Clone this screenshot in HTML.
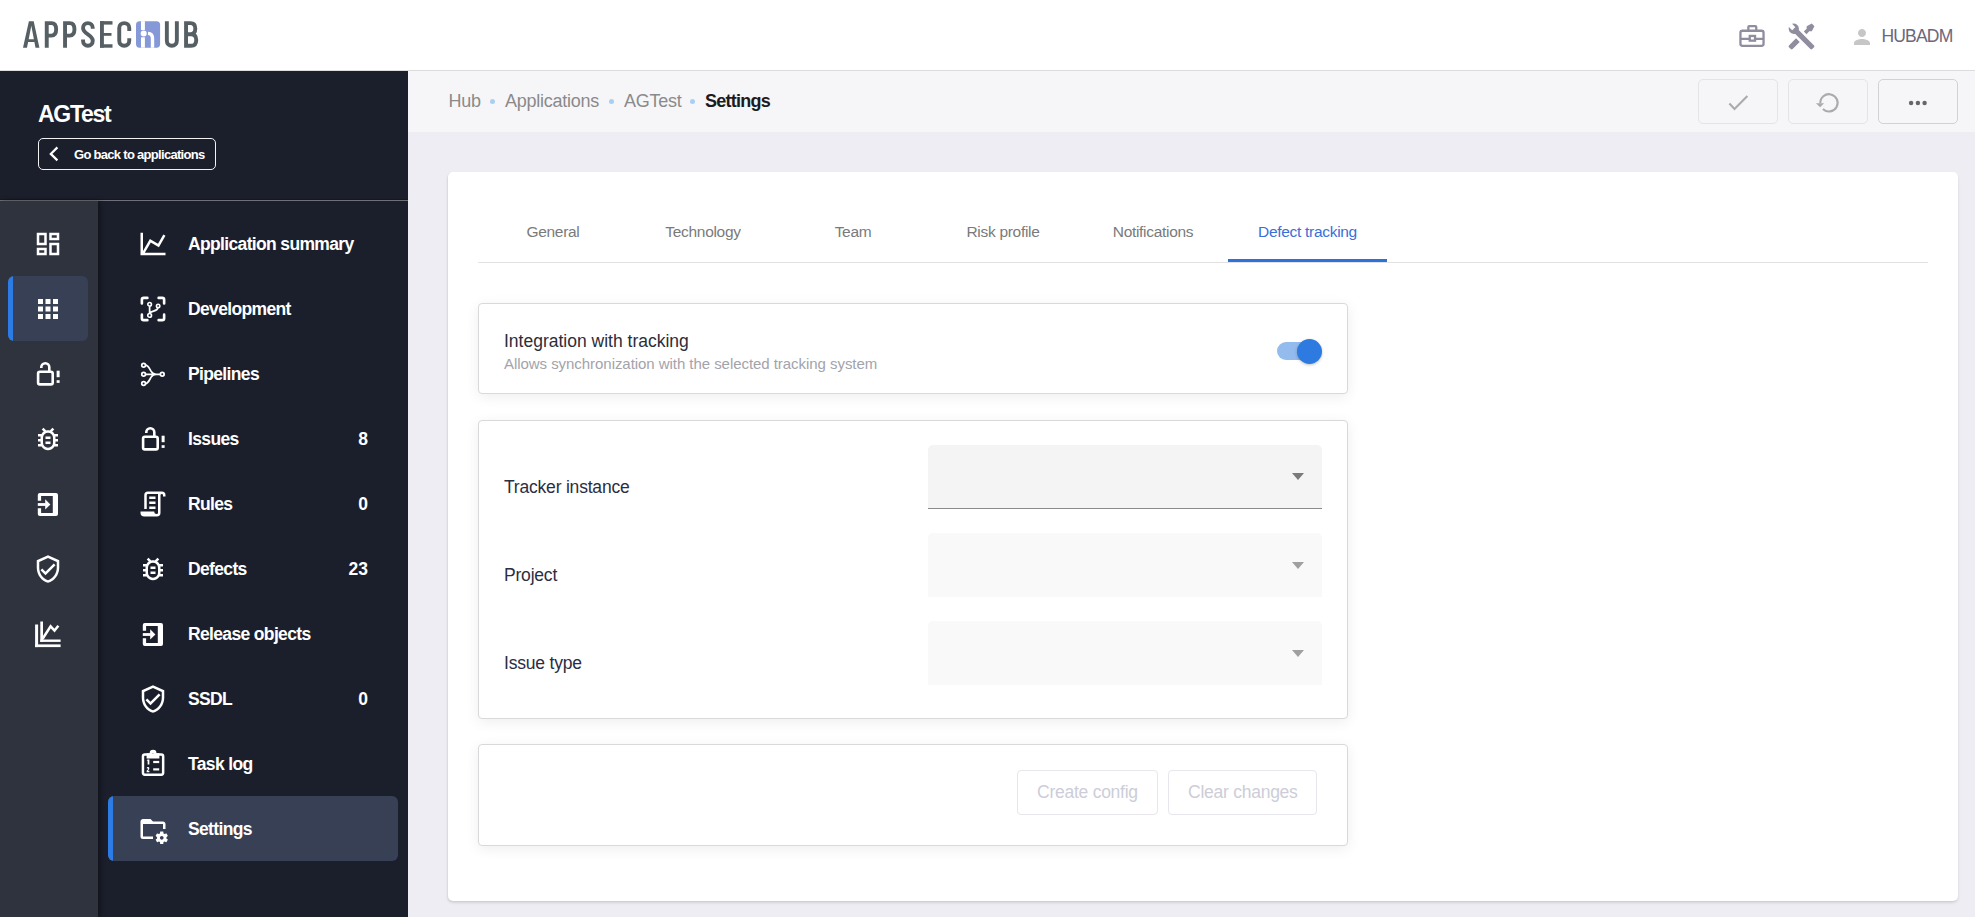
<!DOCTYPE html>
<html><head><meta charset="utf-8">
<style>
*{margin:0;padding:0;box-sizing:border-box}
html,body{width:1975px;height:917px;overflow:hidden;background:#eeedf3;font-family:"Liberation Sans",sans-serif}
.a{position:absolute}
.t{position:absolute;white-space:nowrap;line-height:1}
svg{position:absolute;overflow:visible}
#hdr{left:0;top:0;width:1975px;height:71px;background:#fff;border-bottom:1px solid #dcdcde}
#side{left:0;top:71px;width:408px;height:846px;background:#1b1f2b}
#rail{left:0;top:201px;width:98px;height:716px;background:#2f333e;box-shadow:2px 0 5px rgba(0,0,0,0.4)}
#bc{left:408px;top:71px;width:1567px;height:61px;background:#f6f6f8}
.menu{color:#fff;font-weight:bold;font-size:17.5px;letter-spacing:-0.65px;margin-top:1px}
.cnt{color:#fff;font-weight:bold;font-size:17.5px;text-align:right;width:60px;left:308px;margin-top:1px}
.bct{font-size:18px;color:#8a8a8a;letter-spacing:-0.25px;top:92px}
.dot{width:5px;height:5px;border-radius:50%;background:#a9cff3;top:99px}
.abtn{top:79px;width:80px;height:45px;border:1px solid #e4e4e8;border-radius:5px;background:#f6f6f8}
#card{left:448px;top:172px;width:1510px;height:729px;background:#fff;border-radius:5px;box-shadow:0 2px 3px rgba(0,0,0,0.10),-1px 1px 2px rgba(0,0,0,0.05)}
.tab{font-size:15.5px;color:#7a7a7a;letter-spacing:-0.3px;top:224px;text-align:center;width:160px}
.box{border:1px solid #d9d9db;border-radius:4px;background:#fff;box-shadow:0 3px 14px rgba(0,0,0,0.07)}
.lbl{font-size:17.5px;color:#2b2d42;letter-spacing:-0.2px;left:504px;margin-top:1px}
.dd{left:928px;width:394px;height:64px;border-radius:5px 5px 0 0}
.arr{width:0;height:0;border-left:6px solid transparent;border-right:6px solid transparent;border-top:7px solid #7a7a7a;left:1292px}
.btn{top:770px;height:45px;border:1px solid #e6e6ec;border-radius:4px;background:#fff}
.btnt{font-size:17.5px;color:#cdcdd8;letter-spacing:-0.25px;top:784px}
</style></head><body>
<!-- header -->
<div id="hdr" class="a"></div>
<!-- logo -->
<svg style="left:0;top:0" width="220" height="70" viewBox="0 0 220 70">
<g fill="#566064">
<path fill-rule="evenodd" d="M23,47.7 L28.9,21.15 L33.7,21.15 L39.4,47.7 L35.5,47.7 L34.4,42.1 L28.1,42.1 L27,47.7 Z M28.7,39.3 L31.3,25.8 L33.9,39.3 Z"/>
<rect x="100" y="21.15" width="3.9" height="26.55"/><rect x="100" y="21.15" width="12.5" height="3.45"/><rect x="100" y="33" width="11.5" height="2.8"/><rect x="100" y="44.25" width="12.5" height="3.45"/>
</g>
<g fill="none" stroke="#566064" stroke-width="3.9">
<path d="M46.75,21.15 V47.7 M46.75,23.1 H51.5 Q56.15,23.1 56.15,29.35 Q56.15,35.6 51.5,35.6 H46.75"/>
<path d="M65.05,21.15 V47.7 M65.05,23.1 H69.8 Q74.45,23.1 74.45,29.35 Q74.45,35.6 69.8,35.6 H65.05"/>
<path d="M92.75,28.7 V28 C92.75,25 90.5,23.1 87.9,23.1 C85.2,23.1 83.05,25 83.05,28 C83.05,31 85,32.5 87.9,34.4 C90.8,36.3 92.75,37.8 92.75,40.8 C92.75,43.8 90.6,45.75 87.9,45.75 C85.2,45.75 83.05,43.8 83.05,40.8 V39.6"/>
<path d="M129.25,31 V28 C129.25,25 127.2,23.1 124.25,23.1 C121.3,23.1 119.25,25 119.25,28 V40.8 C119.25,43.8 121.3,45.75 124.25,45.75 C127.2,45.75 129.25,43.8 129.25,40.8 V38.2"/>
<path d="M166.85,21.15 V40.8 C166.85,43.8 168.9,45.75 171.85,45.75 C174.8,45.75 176.85,43.8 176.85,40.8 V21.15"/>
<path d="M186.05,21.15 V47.7 M186.05,23.1 H190.5 Q195.3,23.1 195.3,28.6 Q195.3,34.3 190.5,34.3 H186.05 M186.05,34.3 H191 Q196.25,34.3 196.25,39.9 Q196.25,45.75 191,45.75 H186.05"/>
</g>
<rect x="136" y="21.15" width="24.1" height="26.55" rx="3.6" fill="#8599d8"/>
<g fill="#fff">
<rect x="141" y="21.15" width="3.9" height="8.9"/><rect x="141" y="37.3" width="3.9" height="10.4"/>
<circle cx="143.7" cy="33.5" r="3"/>
</g>
<path d="M148,33.4 Q152.5,33.6 152.5,38.6 V47.7" fill="none" stroke="#fff" stroke-width="3.4"/>
</svg>

<!-- sidebar -->
<div id="side" class="a"></div>
<div class="a" style="left:0;top:199px;width:408px;height:1px;background:#151821"></div><div class="a" style="left:0;top:200px;width:408px;height:1px;background:#6f7177"></div>
<div id="rail" class="a"></div>
<div class="t" style="left:38px;top:102.7px;font-size:23px;font-weight:bold;color:#fff;letter-spacing:-1.3px">AGTest</div>
<div class="a" style="left:38px;top:138px;width:178px;height:32px;border:1.5px solid #f2f2f2;border-radius:5px"></div>
<svg style="left:40px;top:140px" width="30" height="28" viewBox="40 140 30 28"><path d="M57.4,147.4 L50.8,153.9 L57.4,160.4" fill="none" stroke="#fff" stroke-width="2.2"/></svg>
<div class="t" style="left:74px;top:148.1px;font-size:13px;font-weight:bold;color:#fff;letter-spacing:-0.7px">Go back to applications</div>

<!-- rail active -->
<div class="a" style="left:8px;top:276px;width:80px;height:65px;background:#384056;border-radius:6px;overflow:hidden"><div class="a" style="left:0;top:0;width:5px;height:65px;background:#2d7be5"></div></div>
<!-- settings active -->
<div class="a" style="left:108px;top:796px;width:290px;height:65px;background:#384056;border-radius:6px;overflow:hidden"><div class="a" style="left:0;top:0;width:5px;height:65px;background:#2d7be5"></div></div>

<div class="t menu" style="left:188px;top:235px">Application summary</div>
<div class="t menu" style="left:188px;top:300px">Development</div>
<div class="t menu" style="left:188px;top:365px">Pipelines</div>
<div class="t menu" style="left:188px;top:430px">Issues</div>
<div class="t menu" style="left:188px;top:495px">Rules</div>
<div class="t menu" style="left:188px;top:560px">Defects</div>
<div class="t menu" style="left:188px;top:625px">Release objects</div>
<div class="t menu" style="left:188px;top:690px">SSDL</div>
<div class="t menu" style="left:188px;top:755px">Task log</div>
<div class="t menu" style="left:188px;top:820px">Settings</div>
<div class="t cnt" style="top:430px">8</div>
<div class="t cnt" style="top:495px">0</div>
<div class="t cnt" style="top:560px">23</div>
<div class="t cnt" style="top:690px">0</div>

<!-- breadcrumb bar -->
<div id="bc" class="a"></div>
<div class="t bct" style="left:448.5px">Hub</div>
<div class="a dot" style="left:490px"></div>
<div class="t bct" style="left:505px">Applications</div>
<div class="a dot" style="left:609px"></div>
<div class="t bct" style="left:624px">AGTest</div>
<div class="a dot" style="left:690px"></div>
<div class="t bct" style="left:705px;color:#1c1c20;font-weight:bold;letter-spacing:-0.75px">Settings</div>
<div class="a abtn" style="left:1698px"></div>
<div class="a abtn" style="left:1788px"></div>
<div class="a abtn" style="left:1878px;border-color:#d2d2d6"></div>

<!-- main card -->
<div id="card" class="a"></div>
<div class="a" style="left:478px;top:262px;width:1450px;height:1px;background:#e2e2e4"></div>
<div class="t tab" style="left:473px">General</div>
<div class="t tab" style="left:623px">Technology</div>
<div class="t tab" style="left:773px">Team</div>
<div class="t tab" style="left:923px">Risk profile</div>
<div class="t tab" style="left:1073px">Notifications</div>
<div class="t tab" style="left:1227.5px;color:#3a6fd8">Defect tracking</div>
<div class="a" style="left:1228px;top:259px;width:159px;height:3px;background:#2d72d9"></div>

<!-- card 1 -->
<div class="a box" style="left:478px;top:303px;width:870px;height:91px"></div>
<div class="t" style="left:504px;top:332.6px;font-size:17.5px;color:#2b2d3a">Integration with tracking</div>
<div class="t" style="left:504px;top:356.3px;font-size:15px;color:#a3a3ab;letter-spacing:-0.05px">Allows synchronization with the selected tracking system</div>
<div class="a" style="left:1277px;top:342px;width:42px;height:18px;border-radius:9px;background:#94bbee"></div>
<div class="a" style="left:1297px;top:339px;width:25px;height:25px;border-radius:50%;background:#2d7be0;box-shadow:0 1px 3px rgba(0,0,0,0.25)"></div>

<!-- card 2 -->
<div class="a box" style="left:478px;top:419.5px;width:870px;height:299.5px"></div>
<div class="t lbl" style="top:478px">Tracker instance</div>
<div class="t lbl" style="top:566px">Project</div>
<div class="t lbl" style="top:654px">Issue type</div>
<div class="a dd" style="top:445px;background:#f4f4f4;border-bottom:1px solid #8a8a8a"></div>
<div class="a arr" style="top:473px"></div>
<div class="a dd" style="top:533px;background:#f9f9f9"></div>
<div class="a arr" style="top:561.5px;border-top-color:#a0a0a0"></div>
<div class="a dd" style="top:621px;background:#f9f9f9"></div>
<div class="a arr" style="top:649.5px;border-top-color:#a0a0a0"></div>

<!-- card 3 -->
<div class="a box" style="left:478px;top:744px;width:870px;height:102px"></div>
<div class="a btn" style="left:1017px;width:141px"></div>
<div class="a btn" style="left:1168px;width:149px"></div>
<div class="t btnt" style="left:1037px">Create config</div>
<div class="t btnt" style="left:1188px">Clear changes</div>

<!-- icons -->
<svg style="left:138px;top:228.5px" width="30" height="30" viewBox="0 0 24 24"><path fill="#fff" d="M16,11.78L20.24,4.45L21.97,5.45L16.74,14.5L10.23,10.75L5.46,19H22V21H2V3H4V17.54L9.5,8L16,11.78Z"/></svg>
<svg style="left:138px;top:293.5px" width="30" height="30" viewBox="0 0 24 24"><g fill="none" stroke="#fff" stroke-width="2.1" stroke-linecap="round" stroke-linejoin="round">
<path d="M3.1,7.5 V4.6 Q3.1,3.1 4.6,3.1 H7.5"/><path d="M16.5,3.1 H19.4 Q20.9,3.1 20.9,4.6 V7.5"/>
<path d="M3.1,16.5 V19.4 Q3.1,20.9 4.6,20.9 H7.5"/><path d="M16.5,20.9 H19.4 Q20.9,20.9 20.9,19.4 V16.5"/></g>
<g fill="none" stroke="#fff" stroke-width="1.3">
<circle cx="9.3" cy="8.2" r="1.45"/><circle cx="16.1" cy="9.5" r="1.35"/><circle cx="9.3" cy="17.1" r="1.5"/>
<path d="M9.3,9.7 V15.6 M9.6,15.2 C10.5,13.2 15.8,14 15.9,10.9" stroke-width="1.4"/></g></svg>
<svg style="left:138px;top:358.5px" width="30" height="30" viewBox="0 0 24 24"><g fill="none" stroke="#fff" stroke-width="1.4">
<circle cx="4.5" cy="5" r="1.5"/><circle cx="4.5" cy="12.2" r="1.5"/><circle cx="4.5" cy="19.6" r="1.5"/><circle cx="19.4" cy="12.2" r="1.5"/>
<path d="M5.9,4.9 C8.4,4.9 9.4,8.3 10.5,9.9 C11.6,11.5 12.6,12.2 14.5,12.2 M5.9,19.7 C8.4,19.7 9.4,16.1 10.5,14.5 C11.6,12.9 12.6,12.2 14.5,12.2 M6,12.2 H17.9"/></g></svg>
<svg style="left:138px;top:423.5px" width="30" height="30" viewBox="0 0 24 24"><g fill="none" stroke="#fff" stroke-width="2.08">
<rect x="4.08" y="10.16" width="11.68" height="10.16" rx="1.4"/>
<path d="M6.64,7.2 V6.64 A3.2,3.2 0 0 1 13.04,6.64 V10.16"/></g>
<rect x="18.9" y="9.36" width="2.4" height="5.2" fill="#fff"/><rect x="18.9" y="16.96" width="2.4" height="2.16" fill="#fff"/></svg>
<svg style="left:138px;top:488.5px" width="30" height="30" viewBox="0 0 24 24"><path fill="#fff" d="M15,20A1,1 0 0,0 16,19V4H8A1,1 0 0,0 7,5V16H5V5A3,3 0 0,1 8,2H19A3,3 0 0,1 22,5V6H20V5A1,1 0 0,0 19,4A1,1 0 0,0 18,5V9L18,19A3,3 0 0,1 15,22H5A3,3 0 0,1 2,19V18H13A2,2 0 0,0 15,20M9,6H14V8H9V6M9,10H14V12H9V10M9,14H14V16H9V14Z"/></svg>
<svg style="left:138px;top:553.5px" width="30" height="30" viewBox="0 0 24 24"><path fill="#fff" d="M20,8H17.19C16.74,7.2 16.12,6.5 15.37,6L17,4.41L15.59,3L13.42,5.17C12.96,5.06 12.5,5 12,5C11.5,5 11.05,5.06 10.59,5.17L8.41,3L7,4.41L8.62,6C7.87,6.5 7.26,7.21 6.81,8H4V10H6.09C6.03,10.33 6,10.66 6,11V12H4V14H6V15C6,15.34 6.03,15.67 6.09,16H4V18H6.81C8.47,20.87 12.14,21.84 15,20.18C15.91,19.66 16.67,18.9 17.19,18H20V16H17.91C17.97,15.67 18,15.34 18,15V14H20V12H18V11C18,10.66 17.97,10.33 17.91,10H20V8M16,15A4,4 0 0,1 12,19A4,4 0 0,1 8,15V11A4,4 0 0,1 12,7A4,4 0 0,1 16,11V15M14,10V12H10V10H14M10,14H14V16H10V14Z"/></svg>
<svg style="left:138px;top:618.5px" width="30" height="30" viewBox="0 0 24 24"><g fill="#fff">
<path d="M3.84,9.36 V4.8 Q3.84,3.2 5.44,3.2 H18.4 Q20,3.2 20,4.8 V19.92 Q20,21.52 18.4,21.52 H5.44 Q3.84,21.52 3.84,19.92 V15.44 H6.48 V19.12 H15.84 V5.6 H6.48 V9.36 Z"/>
<rect x="3.84" y="11.28" width="6.4" height="2.24"/><path d="M9.76,8.24 L13.92,12.4 L9.76,16.32 Z"/></g></svg>
<svg style="left:138px;top:683.5px" width="30" height="30" viewBox="0 0 24 24"><path fill="#fff" d="M21,11C21,16.55 17.16,21.74 12,23C6.84,21.74 3,16.55 3,11V5L12,1L21,5V11M12,21C15.75,20 19,15.54 19,11.22V6.3L12,3.18L5,6.3V11.22C5,15.54 8.25,20 12,21M10,17L6,13L7.41,11.59L10,14.17L16.59,7.58L18,9"/></svg>
<svg style="left:138px;top:748.5px" width="30" height="30" viewBox="0 0 24 24"><rect x="3.96" y="4.44" width="16.16" height="16.08" rx="1.5" fill="none" stroke="#fff" stroke-width="2"/>
<path fill="#fff" fill-rule="evenodd" d="M6.88,3.44 H9.3 A2.7,2.7 0 0 1 14.8,3.44 H17.12 V7.6 H6.88 Z M11.92,4.0 m-0.9,0 a0.9,0.9 0 1 0 1.8,0 a0.9,0.9 0 1 0 -1.8,0 Z"/>
<g fill="#fff"><rect x="7.7" y="8.4" width="1.4" height="4"/><path d="M6.9,8.9 L7.9,8.4 V9.6 Z"/>
<path d="M6.9,15.4 Q7,14.3 8,14.3 Q9.1,14.3 9.1,15.3 Q9.1,16.1 8.2,16.9 L7.9,17.3 H9.1 V18.5 H6.9 V17.4 L8,16.2 Q8,15.5 7.9,15.5 Q7.9,15.6 7.9,15.6 Z"/>
<rect x="12.16" y="9.52" width="4.8" height="1.76"/><rect x="12.16" y="15.44" width="4.8" height="1.76"/></g></svg>
<svg style="left:138px;top:813.5px" width="30" height="30" viewBox="0 0 24 24"><path fill="#fff" d="M4 4C2.89 4 2 4.89 2 6V18A2 2 0 0 0 4 20H12V18H4V8H20V12H22V8C22 6.89 21.1 6 20 6H12L10 4M18 14C17.87 14 17.76 14.09 17.74 14.21L17.55 15.53C17.25 15.66 16.96 15.82 16.7 16L15.46 15.5C15.35 15.5 15.22 15.5 15.15 15.63L14.15 17.36C14.09 17.47 14.11 17.6 14.21 17.68L15.27 18.5C15.25 18.67 15.24 18.83 15.24 19C15.24 19.17 15.25 19.33 15.27 19.5L14.21 20.32C14.12 20.4 14.09 20.53 14.15 20.64L15.15 22.37C15.21 22.5 15.34 22.5 15.46 22.5L16.7 22C16.96 22.18 17.24 22.35 17.55 22.47L17.74 23.79C17.76 23.91 17.86 24 18 24H20C20.11 24 20.22 23.91 20.24 23.79L20.43 22.47C20.73 22.34 21 22.18 21.27 22L22.5 22.5C22.63 22.5 22.76 22.5 22.83 22.37L23.83 20.64C23.89 20.53 23.86 20.4 23.77 20.32L22.7 19.5C22.72 19.33 22.74 19.17 22.74 19C22.74 18.83 22.73 18.67 22.7 18.5L23.76 17.68C23.85 17.6 23.88 17.47 23.82 17.36L22.82 15.63C22.76 15.5 22.63 15.5 22.5 15.5L21.27 16C21 15.82 20.73 15.65 20.42 15.53L20.23 14.21C20.22 14.09 20.11 14 20 14M19 17.5C19.83 17.5 20.5 18.17 20.5 19C20.5 19.83 19.83 20.5 19 20.5C18.16 20.5 17.5 19.83 17.5 19C17.5 18.17 18.17 17.5 19 17.5Z"/></svg>
<svg style="left:33px;top:228.5px" width="30" height="30" viewBox="0 0 24 24"><path fill="#fff" d="M19 5v2h-4V5h4M9 5v6H5V5h4m10 8v6h-4v-6h4M9 17v2H5v-2h4M21 3h-8v6h8V3zM11 3H3v10h8V3zm10 8h-8v10h8V11zm-10 4H3v6h8v-6z"/></svg>
<svg style="left:33px;top:293.5px" width="30" height="30" viewBox="0 0 24 24"><path fill="#fff" d="M4 8h4V4H4v4zm6 12h4v-4h-4v4zm-6 0h4v-4H4v4zm0-6h4v-4H4v4zm6 0h4v-4h-4v4zm6-10v4h4V4h-4zm-6 4h4V4h-4v4zm6 6h4v-4h-4v4zm0 6h4v-4h-4v4z"/></svg>
<svg style="left:33px;top:358.5px" width="30" height="30" viewBox="0 0 24 24"><g fill="none" stroke="#fff" stroke-width="2.08">
<rect x="4.08" y="10.16" width="11.68" height="10.16" rx="1.4"/>
<path d="M6.64,7.2 V6.64 A3.2,3.2 0 0 1 13.04,6.64 V10.16"/></g>
<rect x="18.9" y="9.36" width="2.4" height="5.2" fill="#fff"/><rect x="18.9" y="16.96" width="2.4" height="2.16" fill="#fff"/></svg>
<svg style="left:33px;top:423.5px" width="30" height="30" viewBox="0 0 24 24"><path fill="#fff" d="M20,8H17.19C16.74,7.2 16.12,6.5 15.37,6L17,4.41L15.59,3L13.42,5.17C12.96,5.06 12.5,5 12,5C11.5,5 11.05,5.06 10.59,5.17L8.41,3L7,4.41L8.62,6C7.87,6.5 7.26,7.21 6.81,8H4V10H6.09C6.03,10.33 6,10.66 6,11V12H4V14H6V15C6,15.34 6.03,15.67 6.09,16H4V18H6.81C8.47,20.87 12.14,21.84 15,20.18C15.91,19.66 16.67,18.9 17.19,18H20V16H17.91C17.97,15.67 18,15.34 18,15V14H20V12H18V11C18,10.66 17.97,10.33 17.91,10H20V8M16,15A4,4 0 0,1 12,19A4,4 0 0,1 8,15V11A4,4 0 0,1 12,7A4,4 0 0,1 16,11V15M14,10V12H10V10H14M10,14H14V16H10V14Z"/></svg>
<svg style="left:33px;top:488.5px" width="30" height="30" viewBox="0 0 24 24"><g fill="#fff">
<path d="M3.84,9.36 V4.8 Q3.84,3.2 5.44,3.2 H18.4 Q20,3.2 20,4.8 V19.92 Q20,21.52 18.4,21.52 H5.44 Q3.84,21.52 3.84,19.92 V15.44 H6.48 V19.12 H15.84 V5.6 H6.48 V9.36 Z"/>
<rect x="3.84" y="11.28" width="6.4" height="2.24"/><path d="M9.76,8.24 L13.92,12.4 L9.76,16.32 Z"/></g></svg>
<svg style="left:33px;top:553.5px" width="30" height="30" viewBox="0 0 24 24"><path fill="#fff" d="M21,11C21,16.55 17.16,21.74 12,23C6.84,21.74 3,16.55 3,11V5L12,1L21,5V11M12,21C15.75,20 19,15.54 19,11.22V6.3L12,3.18L5,6.3V11.22C5,15.54 8.25,20 12,21M10,17L6,13L7.41,11.59L10,14.17L16.59,7.58L18,9"/></svg>
<svg style="left:33px;top:618.5px" width="30" height="30" viewBox="0 0 24 24"><g fill="#fff"><rect x="1.68" y="4.4" width="2.4" height="18.08"/><rect x="1.68" y="20.32" width="20.4" height="2.16"/>
<rect x="5.84" y="2" width="2.16" height="16.32"/><rect x="5.84" y="16.4" width="16.24" height="1.92"/></g>
<path d="M7.6,16 L14.1,5.9 L17.2,9.2 L20.3,5.4" fill="none" stroke="#fff" stroke-width="2"/></svg>
<svg style="left:1730px;top:15px" width="40" height="40" viewBox="1730 15 40 40">
<g fill="none" stroke="#8f8d9e" stroke-width="2.3">
<path d="M1748.35,30 V27 Q1748.35,26.05 1749.3,26.05 H1755.3 Q1756.25,26.05 1756.25,27 V30"/>
<rect x="1740.45" y="30.75" width="23.1" height="15.1" rx="2"/>
<path d="M1740.45,38.85 H1749.75 M1755.05,38.85 H1763.55"/>
<rect x="1749.75" y="35.95" width="5.3" height="4.7"/></g></svg>
<svg style="left:1786.3px;top:20.6px" width="31" height="31" viewBox="0 0 24 24"><path fill="#8f8d9e" d="M21.71 20.29L20.29 21.71A1 1 0 0 1 18.88 21.71L7 9.85A3.81 3.81 0 0 1 6 10A4 4 0 0 1 2.22 4.7L4.76 7.24L5.29 6.71L6.71 5.29L7.24 4.76L4.7 2.22A4 4 0 0 1 10 6A3.81 3.81 0 0 1 9.85 7L21.71 18.88A1 1 0 0 1 21.71 20.29M2.29 18.88A1 1 0 0 0 2.29 20.29L3.71 21.71A1 1 0 0 0 5.12 21.71L10.59 16.25L7.76 13.42M20 2L16 4V6L13.83 8.17L15.83 10.17L18 8H20L22 4Z"/></svg>
<svg style="left:1850px;top:25px" width="24" height="24" viewBox="0 0 24 24"><path fill="#c6c6c6" d="M12 12c2.21 0 4-1.79 4-4s-1.79-4-4-4-4 1.79-4 4 1.79 4 4 4zm0 2c-2.67 0-8 1.34-8 4v2h16v-2c0-2.66-5.33-4-8-4z"/></svg>
<div class="t" style="left:1881.4px;top:28.2px;font-size:17.5px;color:#6a687b;letter-spacing:-0.8px">HUBADM</div>
<svg style="left:1700px;top:80px" width="260" height="45" viewBox="1700 80 260 45">
<path d="M1729.4,103.6 L1734.5,108.9 L1747.4,96.1" fill="none" stroke="#ababab" stroke-width="2.1"/>
<path d="M1820.35,103.4 A8.65,8.65 0 1 1 1822.9,109.0" fill="none" stroke="#ababab" stroke-width="2.1"/>
<path d="M1815.9,103.3 L1824.1,103.3 L1820.1,107.2 Z" fill="#ababab"/>
<g fill="#666"><circle cx="1911.1" cy="103" r="2.2"/><circle cx="1917.9" cy="103" r="2.2"/><circle cx="1924.6" cy="103" r="2.2"/></g>
</svg>
</body></html>
